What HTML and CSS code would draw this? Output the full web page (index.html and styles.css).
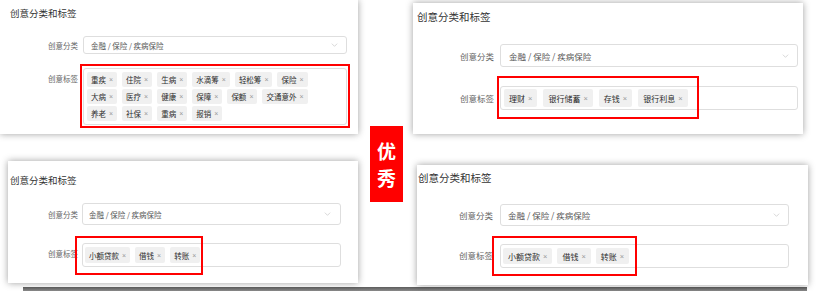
FILE: index.html
```html
<!DOCTYPE html>
<html lang="zh-CN">
<head>
    <meta charset="UTF-8">
    <meta name="viewport" content="width=device-width, initial-scale=1.0">
    <title>创意分类和标签</title>
    <link rel="stylesheet" href="styles.css">
</head>
<body>
    <div class="board">
        <!-- Left column -->
        <div class="column column--left">
            <section class="panel panel--tl">
                <h2 class="panel-title">创意分类和标签</h2>
                <div class="form-row form-row--select">
                    <span class="form-label">创意分类</span>
                    <div class="select">
                        <span class="select-value">金融 / 保险 / 疾病保险</span>
                        <svg class="chevron" viewBox="0 0 10 6"><polyline points="1,1 5,5 9,1"/></svg>
                    </div>
                </div>
                <div class="form-row form-row--tags">
                    <span class="form-label">创意标签</span>
                    <div class="tag-field">
                        <div class="tag-list">
                            <span class="tag">重疾<i>×</i></span>
                            <span class="tag">住院<i>×</i></span>
                            <span class="tag">生病<i>×</i></span>
                            <span class="tag">水滴筹<i>×</i></span>
                            <span class="tag">轻松筹<i>×</i></span>
                            <span class="tag">保险<i>×</i></span>
                            <span class="tag">大病<i>×</i></span>
                            <span class="tag">医疗<i>×</i></span>
                            <span class="tag">健康<i>×</i></span>
                            <span class="tag">保障<i>×</i></span>
                            <span class="tag">保额<i>×</i></span>
                            <span class="tag">交通意外<i>×</i></span>
                            <span class="tag">养老<i>×</i></span>
                            <span class="tag">社保<i>×</i></span>
                            <span class="tag">重病<i>×</i></span>
                            <span class="tag">报销<i>×</i></span>
                        </div>
                        <span class="highlight"></span>
                    </div>
                </div>
            </section>

            <section class="panel panel--bl">
                <h2 class="panel-title">创意分类和标签</h2>
                <div class="form-row form-row--select">
                    <span class="form-label">创意分类</span>
                    <div class="select">
                        <span class="select-value">金融 / 保险 / 疾病保险</span>
                        <svg class="chevron" viewBox="0 0 10 6"><polyline points="1,1 5,5 9,1"/></svg>
                    </div>
                </div>
                <div class="form-row form-row--tags">
                    <span class="form-label">创意标签</span>
                    <div class="tag-field">
                        <div class="tag-list">
                            <span class="tag">小额贷款<i>×</i></span>
                            <span class="tag">借钱<i>×</i></span>
                            <span class="tag">转账<i>×</i></span>
                        </div>
                        <span class="highlight"></span>
                    </div>
                </div>
            </section>
        </div>

        <!-- Middle badge -->
        <div class="column column--mid">
            <div class="badge">优秀</div>
        </div>

        <!-- Right column -->
        <div class="column column--right">
            <section class="panel panel--tr">
                <h2 class="panel-title">创意分类和标签</h2>
                <div class="form-row form-row--select">
                    <span class="form-label">创意分类</span>
                    <div class="select">
                        <span class="select-value">金融 / 保险 / 疾病保险</span>
                        <svg class="chevron" viewBox="0 0 10 6"><polyline points="1,1 5,5 9,1"/></svg>
                    </div>
                </div>
                <div class="form-row form-row--tags">
                    <span class="form-label">创意标签</span>
                    <div class="tag-field">
                        <div class="tag-list">
                            <span class="tag">理财<i>×</i></span>
                            <span class="tag">银行储蓄<i>×</i></span>
                            <span class="tag">存钱<i>×</i></span>
                            <span class="tag">银行利息<i>×</i></span>
                        </div>
                        <span class="highlight"></span>
                    </div>
                </div>
            </section>

            <section class="panel panel--br">
                <h2 class="panel-title">创意分类和标签</h2>
                <div class="form-row form-row--select">
                    <span class="form-label">创意分类</span>
                    <div class="select">
                        <span class="select-value">金融 / 保险 / 疾病保险</span>
                        <svg class="chevron" viewBox="0 0 10 6"><polyline points="1,1 5,5 9,1"/></svg>
                    </div>
                </div>
                <div class="form-row form-row--tags">
                    <span class="form-label">创意标签</span>
                    <div class="tag-field">
                        <div class="tag-list">
                            <span class="tag">小额贷款<i>×</i></span>
                            <span class="tag">借钱<i>×</i></span>
                            <span class="tag">转账<i>×</i></span>
                        </div>
                        <span class="highlight"></span>
                    </div>
                </div>
            </section>
        </div>
    </div>

    <div class="base-line"></div>
</body>
</html>
```

FILE: styles.css
```css
/* Base Styles */
* {
    box-sizing: border-box;
    margin: 0;
    padding: 0;
}

body {
    font-family: "Noto Sans CJK SC", "Noto Sans", sans-serif;
    background: #ffffff;
    color: #333333;
    width: 816px;
    height: 291px;
    overflow: hidden;
}

/* Board layout */
.board {
    display: flex;
    height: 287px;
}

.column {
    display: flex;
    flex-direction: column;
}

.column--left {
    width: 358px;
}

.column--mid {
    width: 55px;
    align-items: flex-start;
    padding: 126px 0 0 12px;
}

.column--right {
    width: 395px;
}

/* Panels */
.panel {
    background: #ffffff;
    box-shadow: 0 0 7px rgba(0, 0, 0, 0.38);
    display: flex;
    flex-direction: column;
}

.panel-title {
    font-weight: 400;
    color: #333333;
    white-space: nowrap;
}

.form-row {
    display: grid;
}

.form-row--select {
    align-items: center;
}

.form-row--tags {
    align-items: start;
}

.form-label {
    text-align: right;
    color: #666666;
    white-space: nowrap;
}

.select {
    display: flex;
    align-items: center;
    justify-content: space-between;
    border: 1px solid #dedede;
    border-radius: 3px;
    color: #555555;
    white-space: nowrap;
}

.chevron {
    width: 7px;
    height: 4px;
    fill: none;
    stroke: #c4c4c4;
    stroke-width: 1;
}

.tag-field {
    position: relative;
    border: 1px solid #dedede;
    border-radius: 3px;
}

.tag-list {
    display: flex;
    flex-wrap: wrap;
}

.tag {
    display: inline-flex;
    align-items: center;
    background: #f0f0f0;
    border-radius: 2px;
    color: #2b2b2b;
    white-space: nowrap;
}

.tag i {
    font-family: "Liberation Sans", sans-serif;
    font-style: normal;
    color: #999999;
}

/* Red highlight box drawn over the tag field */
.highlight {
    position: absolute;
    border: 2px solid #ff0000;
    pointer-events: none;
}

/* Top-left panel */
.panel--tl {
    height: 134px;
    padding: 6px 0 0 10px;
}

.panel--tl .panel-title {
    font-size: 9.5px;
    line-height: 14px;
}

.panel--tl .form-row {
    grid-template-columns: 68px 264px;
    column-gap: 5px;
}

.panel--tl .form-label {
    font-size: 7.5px;
}

.panel--tl .form-row--select {
    margin-top: 16px;
}

.panel--tl .select {
    height: 18px;
    padding: 0 8px 0 7px;
    font-size: 7.5px;
}

.panel--tl .form-row--tags {
    margin-top: 14px;
}

.panel--tl .form-row--tags .form-label {
    line-height: 15px;
    padding-top: 3px;
}

.panel--tl .tag-field {
    height: 57px;
    padding: 3px 3px;
}

.panel--tl .tag-list {
    max-width: 226px;
    gap: 2px 5px;
}

.panel--tl .tag {
    height: 15px;
    padding: 0 4px;
    font-size: 7.5px;
}

.panel--tl .tag i {
    margin-left: 3px;
    font-size: 7px;
}

.panel--tl .highlight {
    left: -4px;
    right: -4px;
    top: -5px;
    bottom: -4px;
}

/* Bottom-left panel */
.panel--bl {
    margin: 27px 0 0 8px;
    height: 122px;
    padding: 12px 0 0 2px;
}

.panel--bl .panel-title {
    font-size: 9.5px;
    line-height: 14px;
}

.panel--bl .form-row {
    grid-template-columns: 68px 259px;
    column-gap: 4px;
}

.panel--bl .form-label {
    font-size: 7.5px;
}

.panel--bl .form-row--select {
    margin-top: 16px;
}

.panel--bl .select {
    height: 22px;
    padding: 0 9px 0 6px;
    font-size: 7.5px;
}

.panel--bl .form-row--tags {
    margin-top: 18px;
}

.panel--bl .form-row--tags .form-label {
    line-height: 16px;
    padding-top: 3px;
}

.panel--bl .tag-field {
    height: 24px;
    padding: 3px 2px;
}

.panel--bl .tag-list {
    gap: 4px 5px;
}

.panel--bl .tag {
    height: 16px;
    padding: 0 4px;
    font-size: 7.5px;
}

.panel--bl .tag i {
    margin-left: 3px;
    font-size: 7px;
}

.panel--bl .highlight {
    left: -8px;
    width: 128px;
    top: -8px;
    bottom: -9px;
}

/* Top-right panel */
.panel--tr {
    margin-top: 3px;
    width: 390px;
    height: 131px;
    padding: 6px 0 0 4px;
}

.panel--tr .panel-title {
    font-size: 10.5px;
    line-height: 15px;
}

.panel--tr .form-row {
    grid-template-columns: 77px 298px;
    column-gap: 6px;
}

.panel--tr .form-label {
    font-size: 8.5px;
}

.panel--tr .form-row--select {
    margin-top: 20px;
}

.panel--tr .select {
    height: 23px;
    padding: 0 8px 0 8px;
    font-size: 8.5px;
}

.panel--tr .form-row--tags {
    margin-top: 19px;
}

.panel--tr .form-row--tags .form-label {
    line-height: 18px;
    padding-top: 3px;
}

.panel--tr .tag-field {
    height: 24px;
    padding: 2px 3px;
}

.panel--tr .tag-list {
    gap: 4px 6px;
}

.panel--tr .tag {
    height: 18px;
    padding: 0 5px;
    font-size: 8px;
}

.panel--tr .tag i {
    margin-left: 3px;
    font-size: 7.5px;
}

.panel--tr .highlight {
    left: -4px;
    width: 202px;
    top: -11px;
    bottom: -10px;
}

/* Bottom-right panel */
.panel--br {
    margin: 31px 0 0 4px;
    width: 391px;
    height: 120px;
    padding: 5px 0 0 1px;
}

.panel--br .panel-title {
    font-size: 10.5px;
    line-height: 15px;
}

.panel--br .form-row {
    grid-template-columns: 75px 289px;
    column-gap: 7px;
}

.panel--br .form-label {
    font-size: 8.5px;
}

.panel--br .form-row--select {
    margin-top: 19px;
}

.panel--br .select {
    height: 22px;
    padding: 0 8px 0 7px;
    font-size: 8.5px;
}

.panel--br .form-row--tags {
    margin-top: 18px;
}

.panel--br .form-row--tags .form-label {
    line-height: 16px;
    padding-top: 3px;
}

.panel--br .tag-field {
    height: 24px;
    padding: 3px 2px;
}

.panel--br .tag-list {
    gap: 4px 5px;
}

.panel--br .tag {
    height: 16px;
    padding: 0 5px;
    font-size: 8px;
}

.panel--br .tag i {
    margin-left: 3px;
    font-size: 7.5px;
}

.panel--br .highlight {
    left: -9px;
    width: 145px;
    top: -9px;
    bottom: -9px;
}

/* "优秀" badge */
.badge {
    width: 33px;
    height: 76px;
    background: #ff0000;
    color: #ffffff;
    font-size: 19px;
    font-weight: 700;
    line-height: 27px;
    text-align: center;
    padding-top: 11px;
}

/* Bottom edge */
.base-line {
    margin-left: 23px;
    width: 784px;
    height: 4px;
    background: linear-gradient(#5c5c5c, #8a8a8a);
}
```
